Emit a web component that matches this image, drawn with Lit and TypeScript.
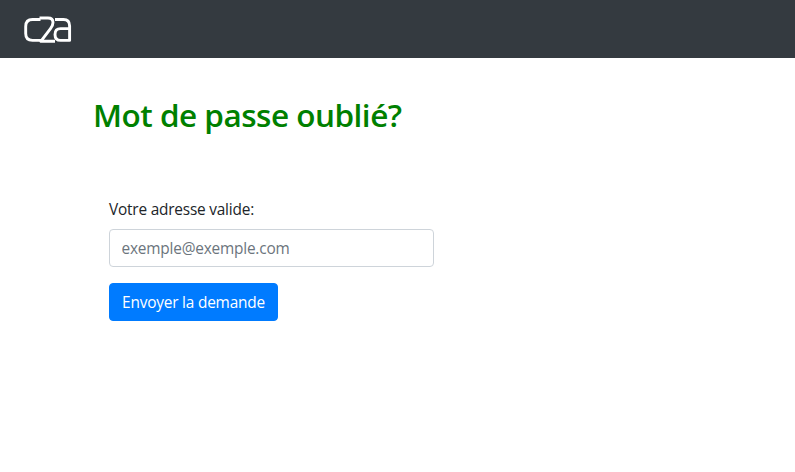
import { LitElement, html, css } from "lit";
import { customElement } from "lit/decorators.js";

@customElement("app-root")
export class AppRoot extends LitElement {
  static styles = css`
    :host {
      display: block;
      min-height: 100vh;
      background: #fff;
      color: #212529;
      font: 400 15.4px/24px "Segoe UI", "Open Sans", "Noto Sans", sans-serif;
    }
    * { box-sizing: border-box; }
    .bar {
      display: flex;
      align-items: flex-start;
      height: 58px;
      padding: 12px 20px;
      background: #343a40;
    }
    .logo { display: block; }
    .page { padding: 35px 93px 0; }
    h1 {
      margin: 0;
      color: #008000;
      font-size: 31.5px;
      font-weight: 600;
      line-height: 44px;
      letter-spacing: -0.5px;
      white-space: nowrap;
    }
    form {
      display: flex;
      flex-direction: column;
      align-items: flex-start;
      width: 341px;
      margin-top: 61px;
      padding-left: 16px;
    }
    label { margin-bottom: 7px; letter-spacing: -0.2px; color: #212529; }
    input {
      width: 325px;
      height: 38px;
      margin: 0 0 16px;
      padding: 6px 11.5px;
      border: 1px solid #ced4da;
      border-radius: 4px;
      background: #fff;
      color: #495057;
      font: inherit;
      letter-spacing: -0.2px;
    }
    input::placeholder { color: #6c757d; opacity: 1; }
    button {
      width: 169px;
      height: 38px;
      padding: 7px 0 5px;
      border: 1px solid #007bff;
      border-radius: 4px;
      background: #007bff;
      color: #fff;
      font: inherit;
      letter-spacing: -0.2px;
      white-space: nowrap;
    }
  `;

  render() {
    return html`
      <header class="bar">
        <svg class="logo" width="56" height="34" viewBox="20 12 56 34" fill="none"
          stroke="#fff" stroke-width="2.9" stroke-linejoin="round" role="img" aria-label="c2a">
          <path d="M40.5 19.5H32.5Q25.7 19.5 25.7 26.5V33.5Q25.7 40.4 32.5 40.4H41" />
          <path d="M39.5 18H48Q53 18 53 22.5Q53 25.5 50.5 28.7L40.8 41.3H55" />
          <path d="M55 19.5H63.5Q69.6 19.5 69.6 26V40.4H60.5Q55 40.4 55 34.5Q55 28.6 60.5 28.6H69" />
        </svg>
      </header>
      <main class="page">
        <h1>Mot de passe oublié?</h1>
        <form @submit=${(e: Event) => e.preventDefault()}>
          <label for="email">Votre adresse valide:</label>
          <input id="email" type="email" placeholder="exemple@exemple.com" />
          <button type="submit">Envoyer la demande</button>
        </form>
      </main>
    `;
  }
}
